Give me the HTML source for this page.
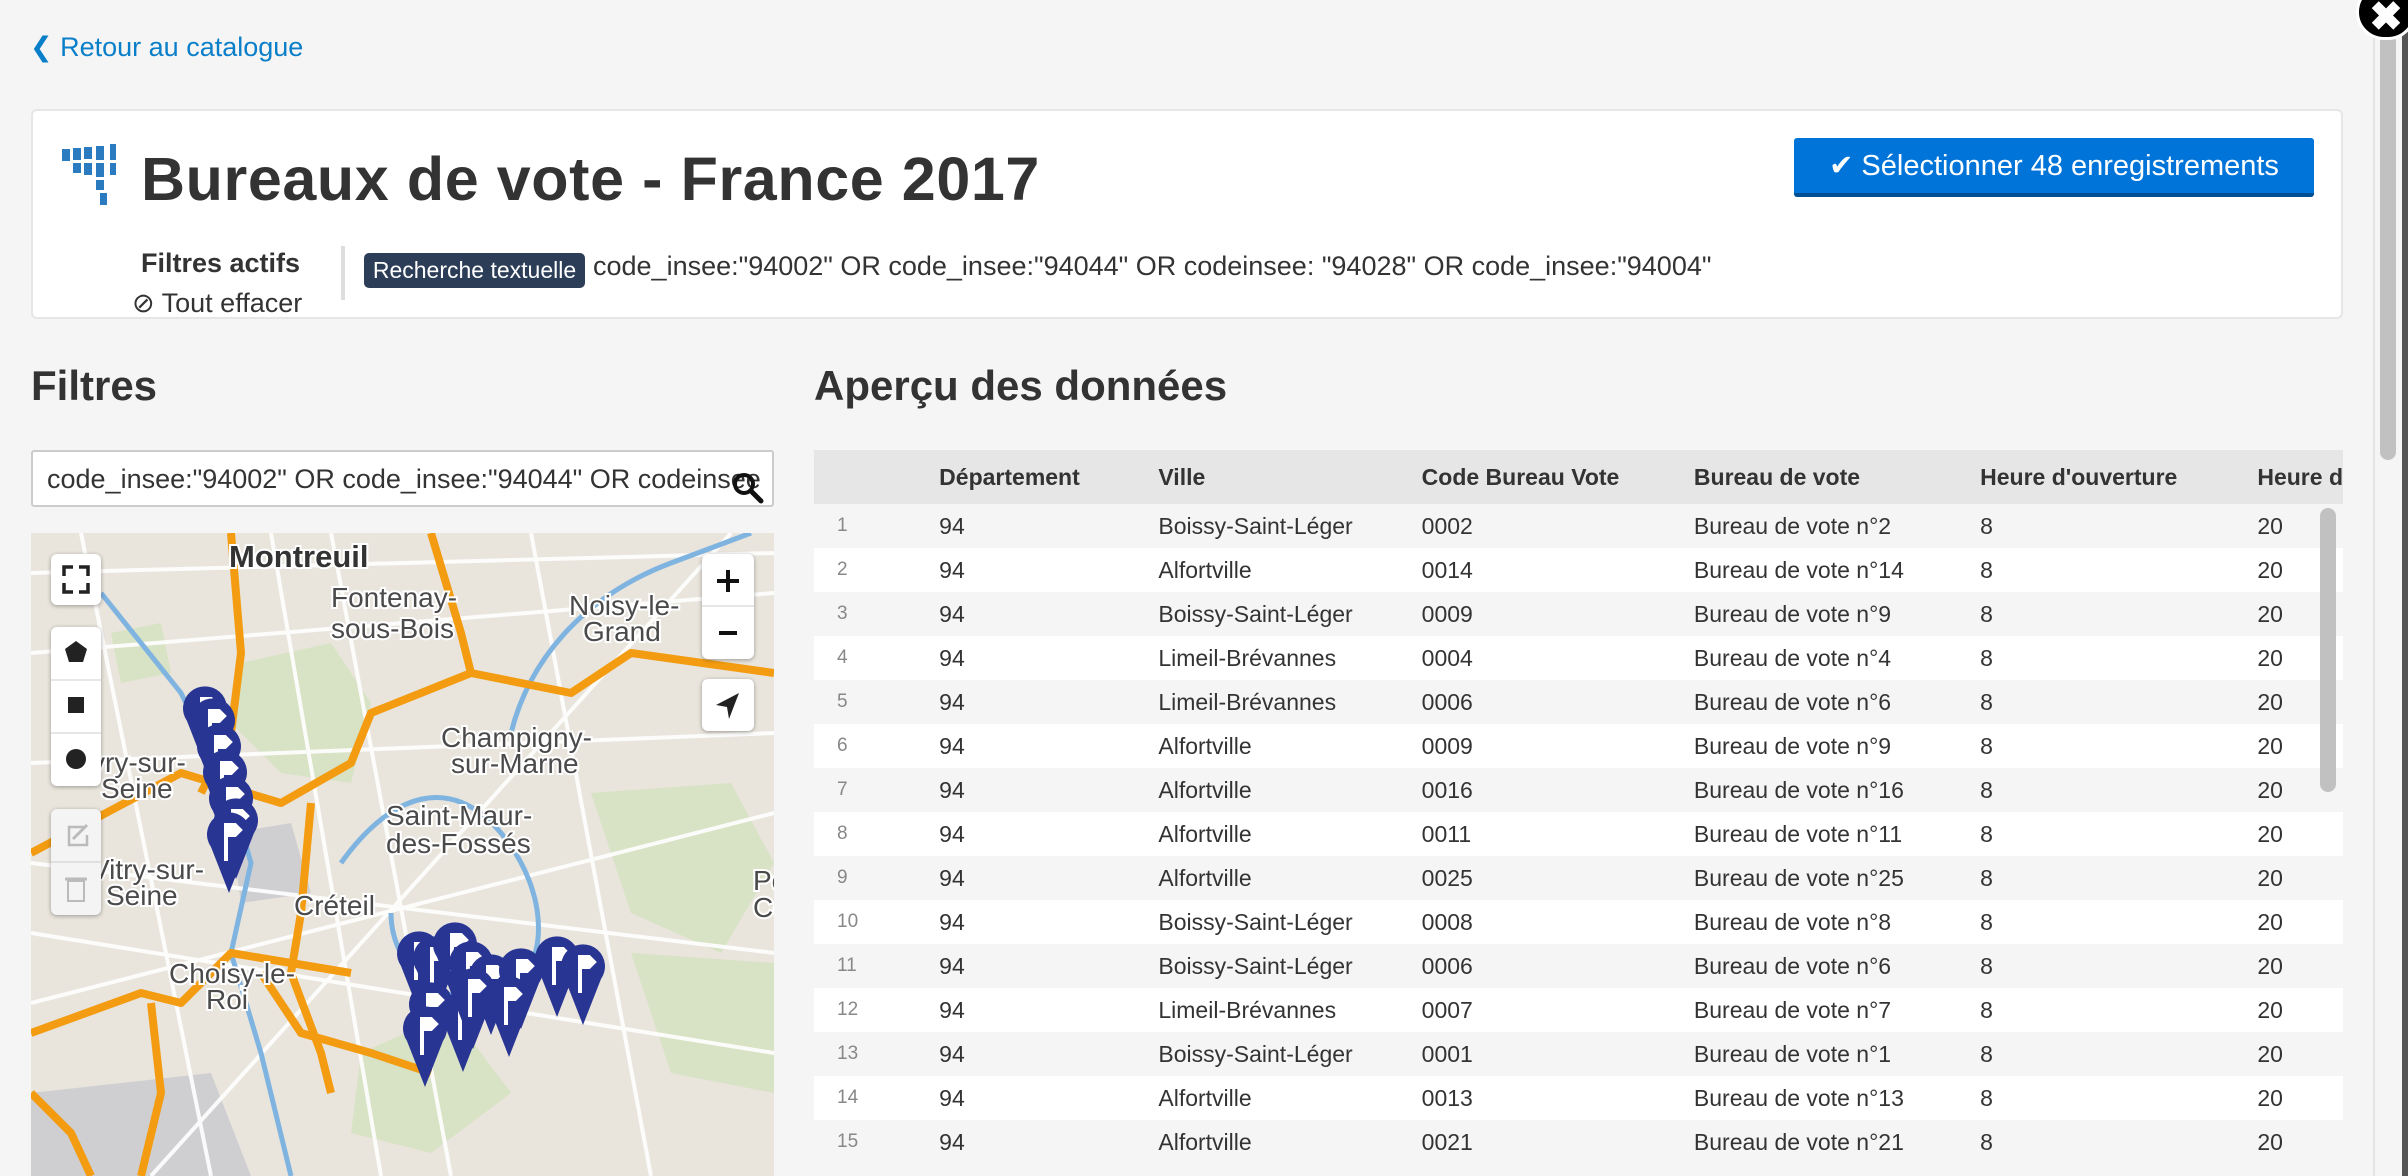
<!DOCTYPE html>
<html><head><meta charset="utf-8">
<style>
*{box-sizing:border-box;margin:0;padding:0}
body{width:2408px;height:1176px;overflow:hidden;background:#f5f5f5;font-family:"Liberation Sans",sans-serif;color:#333;position:relative}
.abs{position:absolute}
.back{left:30px;top:32px;font-size:27px;color:#0a7fc9}
.card{left:31px;top:109px;width:2312px;height:210px;background:#fff;border:2px solid #e6e6e6;border-radius:6px}
.title{left:141px;top:144px;font-size:61px;font-weight:bold;color:#333;letter-spacing:0.6px}
.btn{left:1794px;top:138px;width:520px;height:59px;background:#0074d9;border-radius:3px;border-bottom:4px solid #004f95;color:#fff;font-size:29px;line-height:56px;text-align:center}
.fa{left:141px;top:248px;font-size:27px;font-weight:bold}
.te{left:132px;top:288px;font-size:27px}
.sep{left:341px;top:246px;width:4px;height:54px;background:#ddd}
.badge{left:364px;top:253px;width:221px;height:35px;background:#2c3e57;border-radius:5px;color:#fff;font-size:23px;line-height:35px;text-align:center}
.q{left:593px;top:251px;font-size:27px}
h2{position:absolute;font-size:42px;font-weight:bold}
.search{left:31px;top:450px;width:743px;height:57px;background:#fff;border:2px solid #ccc;border-radius:3px;font-size:27px;padding:12px 14px;white-space:nowrap;overflow:hidden}
.map{left:31px;top:533px;width:743px;height:643px;overflow:hidden;background:#e9e5dd}
table{position:absolute;left:814px;top:450px;width:1529px;border-collapse:collapse;font-size:23px}
th{height:54px;background:#e6e6e6;text-align:left;font-weight:bold;white-space:nowrap;overflow:hidden}
td{height:44px;white-space:nowrap}
tr:nth-child(even) td{background:#f5f5f5}
tr:nth-child(odd) td{background:#fff}
td.n{color:#888;font-size:19px;padding-left:23px}
.ctl{position:absolute;background:#fff;border-radius:6px;box-shadow:0 1px 4px rgba(0,0,0,.35)}
.lbl{font-family:"Liberation Sans",sans-serif;font-size:28px;fill:#4a4a4a;stroke:#fff;stroke-width:4px;paint-order:stroke}
</style></head><body>
<div class="abs back">&#10094;&nbsp;Retour au catalogue</div>
<div class="abs card"></div>
<svg class="abs" style="left:60px;top:143px" width="62" height="62" viewBox="0 0 62 62">
<g fill="#2a7bbf"><rect x="2" y="6" width="8" height="12"/><rect x="13" y="5" width="8" height="12"/><rect x="24" y="4" width="8" height="12"/><rect x="36" y="3" width="8" height="14"/><rect x="50" y="1" width="6" height="16"/>
<rect x="13" y="20" width="8" height="10"/><rect x="24" y="20" width="8" height="12"/><rect x="36" y="20" width="8" height="14"/><rect x="50" y="20" width="6" height="12"/>
<rect x="36" y="37" width="8" height="10"/><rect x="40" y="50" width="7" height="12"/></g></svg>
<div class="abs title">Bureaux de vote - France 2017</div>
<div class="abs btn">&#10004; Sélectionner 48 enregistrements</div>
<div class="abs fa">Filtres actifs</div>
<div class="abs te">&#8856; Tout effacer</div>
<div class="abs sep"></div>
<div class="abs badge">Recherche textuelle</div>
<div class="abs q">code_insee:"94002" OR code_insee:"94044" OR codeinsee: "94028" OR code_insee:"94004"</div>
<h2 style="left:31px;top:362px">Filtres</h2>
<h2 style="left:814px;top:362px">Aperçu des données</h2>
<div class="abs search">code_insee:"94002" OR code_insee:"94044" OR codeinsee</div>
<svg class="abs" style="left:730px;top:470px" width="36" height="36" viewBox="0 0 36 36"><circle cx="14" cy="14" r="9" fill="none" stroke="#111" stroke-width="4"/><line x1="21" y1="21" x2="31" y2="31" stroke="#111" stroke-width="5" stroke-linecap="round"/></svg>
<div class="abs map">
<svg width="743" height="643" viewBox="0 0 743 643">
<rect width="743" height="643" fill="#e9e5dd"/>
<g fill="#d8e2c4"><path d="M210 130 L300 110 L340 170 L320 250 L250 240 L200 190Z"/><path d="M560 260 L700 250 L743 330 L690 420 L600 380Z"/><path d="M330 520 L420 480 L480 560 L400 620 L320 600Z"/><path d="M600 420 L743 430 L743 560 L640 540Z"/><path d="M80 100 L130 90 L140 140 L90 150Z"/></g>
<g fill="#cfcfd2"><path d="M0 560 L180 540 L220 643 L0 643Z"/><path d="M200 300 L260 290 L280 360 L210 370Z"/></g>
<g fill="none" stroke="#fff" stroke-width="4" opacity=".9"><path d="M0 120 L743 60"/><path d="M50 0 L180 643"/><path d="M300 0 L420 643"/><path d="M0 330 L743 420"/><path d="M500 0 L620 643"/><path d="M0 470 L743 280"/><path d="M120 643 L700 0"/><path d="M0 230 L743 200"/><path d="M0 40 L743 20"/><path d="M240 0 L350 643"/><path d="M0 400 L743 520"/></g>
<g fill="none" stroke="#7fb3e0" stroke-width="5"><path d="M70 60 L150 160 L200 260 L220 330 L200 420 L230 520 L260 643"/><path d="M310 330 C360 260 420 240 470 300 C520 360 520 440 470 460 C420 480 360 440 360 380"/><path d="M480 200 C500 120 560 60 640 30 L720 0"/></g>
<g fill="none" stroke="#f39c12" stroke-width="8" stroke-linejoin="round"><path d="M0 320 L150 240 L250 270 L320 230 L340 180 L440 140 L540 160 L600 120 L743 140"/><path d="M200 0 L210 120 L200 200 L170 260"/><path d="M400 0 L430 100 L440 140"/><path d="M280 270 L270 380 L260 440 L290 520 L300 560"/><path d="M0 500 L110 460 L150 470 L200 420 L260 430 L320 440"/><path d="M230 440 L270 500 L340 520 L400 540"/><path d="M0 560 L40 600 L60 643"/><path d="M120 470 L130 560 L110 643"/></g>
<g class="lbl"><text x="198" y="34" style="font-size:31px;fill:#333;font-weight:bold">Montreuil</text>
<text x="300" y="74">Fontenay-</text><text x="300" y="105">sous-Bois</text>
<text x="538" y="82">Noisy-le-</text><text x="552" y="108">Grand</text>
<text x="410" y="214">Champigny-</text><text x="420" y="240">sur-Marne</text>
<text x="355" y="292">Saint-Maur-</text><text x="355" y="320">des-Fossés</text>
<text x="60" y="239">vry-sur-</text><text x="70" y="265">Seine</text>
<text x="60" y="346">Vitry-sur-</text><text x="75" y="372">Seine</text>
<text x="263" y="382">Créteil</text>
<text x="138" y="450">Choisy-le-</text><text x="175" y="476">Roi</text>
<text x="722" y="357">Po</text><text x="722" y="384">Co</text></g>
<defs><g id="pin"><path d="M22 84 L4 38 A22 22 0 1 1 40 38 Z" fill="#283593"/><path d="M19 16 h9 l5 5 l-5 5 h-9 z M19 16 v36" stroke="#fff" stroke-width="4" fill="#fff"/></g></defs>
<use href="#pin" x="152" y="150"/><use href="#pin" x="160" y="162"/><use href="#pin" x="166" y="188"/><use href="#pin" x="172" y="214"/><use href="#pin" x="178" y="240"/><use href="#pin" x="183" y="262"/><use href="#pin" x="176" y="276"/>
<use href="#pin" x="366" y="395"/><use href="#pin" x="382" y="400"/><use href="#pin" x="402" y="386"/><use href="#pin" x="418" y="405"/><use href="#pin" x="438" y="418"/><use href="#pin" x="468" y="412"/><use href="#pin" x="504" y="400"/><use href="#pin" x="530" y="408"/><use href="#pin" x="378" y="446"/><use href="#pin" x="410" y="455"/><use href="#pin" x="372" y="470"/><use href="#pin" x="420" y="432"/><use href="#pin" x="456" y="440"/>
</svg>
<div class="ctl" style="left:20px;top:21px;width:50px;height:51px"><svg width="50" height="51"><path d="M13 22 V13 H22 M28 13 H37 V22 M37 29 V38 H28 M22 38 H13 V29" fill="none" stroke="#222" stroke-width="3.5"/></svg></div>
<div class="ctl" style="left:20px;top:94px;width:50px;height:159px"><svg width="50" height="159"><polygon points="25,14 36,22 32,35 18,35 14,22" fill="#222"/><line x1="0" y1="53" x2="50" y2="53" stroke="#ccc"/><rect x="17" y="70" width="16" height="16" fill="#222"/><line x1="0" y1="106" x2="50" y2="106" stroke="#ccc"/><circle cx="25" cy="132" r="10" fill="#222"/></svg></div>
<div class="ctl" style="left:20px;top:276px;width:50px;height:106px;background:#f4f4f4"><svg width="50" height="106"><path d="M33 18 h-15 v18 h18 v-10" fill="none" stroke="#bbb" stroke-width="2.5"/><path d="M22 30 l14 -14" stroke="#bbb" stroke-width="3"/><line x1="0" y1="53" x2="50" y2="53" stroke="#ccc"/><rect x="17" y="72" width="16" height="20" fill="none" stroke="#bbb" stroke-width="2"/><line x1="14" y1="70" x2="36" y2="70" stroke="#bbb" stroke-width="3"/></svg></div>
<div class="ctl" style="left:671px;top:21px;width:52px;height:105px"><svg width="52" height="105"><path d="M26 16 v22 M15 27 h22" stroke="#111" stroke-width="4"/><line x1="0" y1="52" x2="52" y2="52" stroke="#ccc"/><path d="M17 79 h18" stroke="#111" stroke-width="4"/></svg></div>
<div class="ctl" style="left:671px;top:146px;width:52px;height:52px"><svg width="52" height="52"><path d="M37 14 L14 26 L25 28 L27 40 Z" fill="#222"/></svg></div>
</div>
<table>
<tr><th style="width:126px"></th><th style="width:220px">Département</th><th style="width:264px">Ville</th><th style="width:273px">Code Bureau Vote</th><th style="width:287px">Bureau de vote</th><th style="width:278px">Heure d'ouverture</th><th>Heure d</th></tr>
<tr><td class="n">1</td><td>94</td><td>Boissy-Saint-Léger</td><td>0002</td><td>Bureau de vote n°2</td><td>8</td><td>20</td></tr>
<tr><td class="n">2</td><td>94</td><td>Alfortville</td><td>0014</td><td>Bureau de vote n°14</td><td>8</td><td>20</td></tr>
<tr><td class="n">3</td><td>94</td><td>Boissy-Saint-Léger</td><td>0009</td><td>Bureau de vote n°9</td><td>8</td><td>20</td></tr>
<tr><td class="n">4</td><td>94</td><td>Limeil-Brévannes</td><td>0004</td><td>Bureau de vote n°4</td><td>8</td><td>20</td></tr>
<tr><td class="n">5</td><td>94</td><td>Limeil-Brévannes</td><td>0006</td><td>Bureau de vote n°6</td><td>8</td><td>20</td></tr>
<tr><td class="n">6</td><td>94</td><td>Alfortville</td><td>0009</td><td>Bureau de vote n°9</td><td>8</td><td>20</td></tr>
<tr><td class="n">7</td><td>94</td><td>Alfortville</td><td>0016</td><td>Bureau de vote n°16</td><td>8</td><td>20</td></tr>
<tr><td class="n">8</td><td>94</td><td>Alfortville</td><td>0011</td><td>Bureau de vote n°11</td><td>8</td><td>20</td></tr>
<tr><td class="n">9</td><td>94</td><td>Alfortville</td><td>0025</td><td>Bureau de vote n°25</td><td>8</td><td>20</td></tr>
<tr><td class="n">10</td><td>94</td><td>Boissy-Saint-Léger</td><td>0008</td><td>Bureau de vote n°8</td><td>8</td><td>20</td></tr>
<tr><td class="n">11</td><td>94</td><td>Boissy-Saint-Léger</td><td>0006</td><td>Bureau de vote n°6</td><td>8</td><td>20</td></tr>
<tr><td class="n">12</td><td>94</td><td>Limeil-Brévannes</td><td>0007</td><td>Bureau de vote n°7</td><td>8</td><td>20</td></tr>
<tr><td class="n">13</td><td>94</td><td>Boissy-Saint-Léger</td><td>0001</td><td>Bureau de vote n°1</td><td>8</td><td>20</td></tr>
<tr><td class="n">14</td><td>94</td><td>Alfortville</td><td>0013</td><td>Bureau de vote n°13</td><td>8</td><td>20</td></tr>
<tr><td class="n">15</td><td>94</td><td>Alfortville</td><td>0021</td><td>Bureau de vote n°21</td><td>8</td><td>20</td></tr>
</table>
<div class="abs" style="left:2320px;top:508px;width:16px;height:284px;background:#c1c1c1;border-radius:8px"></div>
<div class="abs" style="left:2373px;top:0;width:30px;height:1176px;background:#f5f5f5;border-left:2px solid #e4e4e4"></div>
<div class="abs" style="left:2380px;top:34px;width:16px;height:426px;background:#c1c1c1;border-radius:8px"></div>
<div class="abs" style="left:2402px;top:0;width:6px;height:1176px;background:#555"></div>
<div class="abs" style="left:2356px;top:-16px;width:60px;height:56px;border-radius:30px;background:#000;border:3px solid #fff;color:#fff;font-size:40px;font-weight:bold;text-align:center;line-height:60px">&#10006;</div>
</body></html>
